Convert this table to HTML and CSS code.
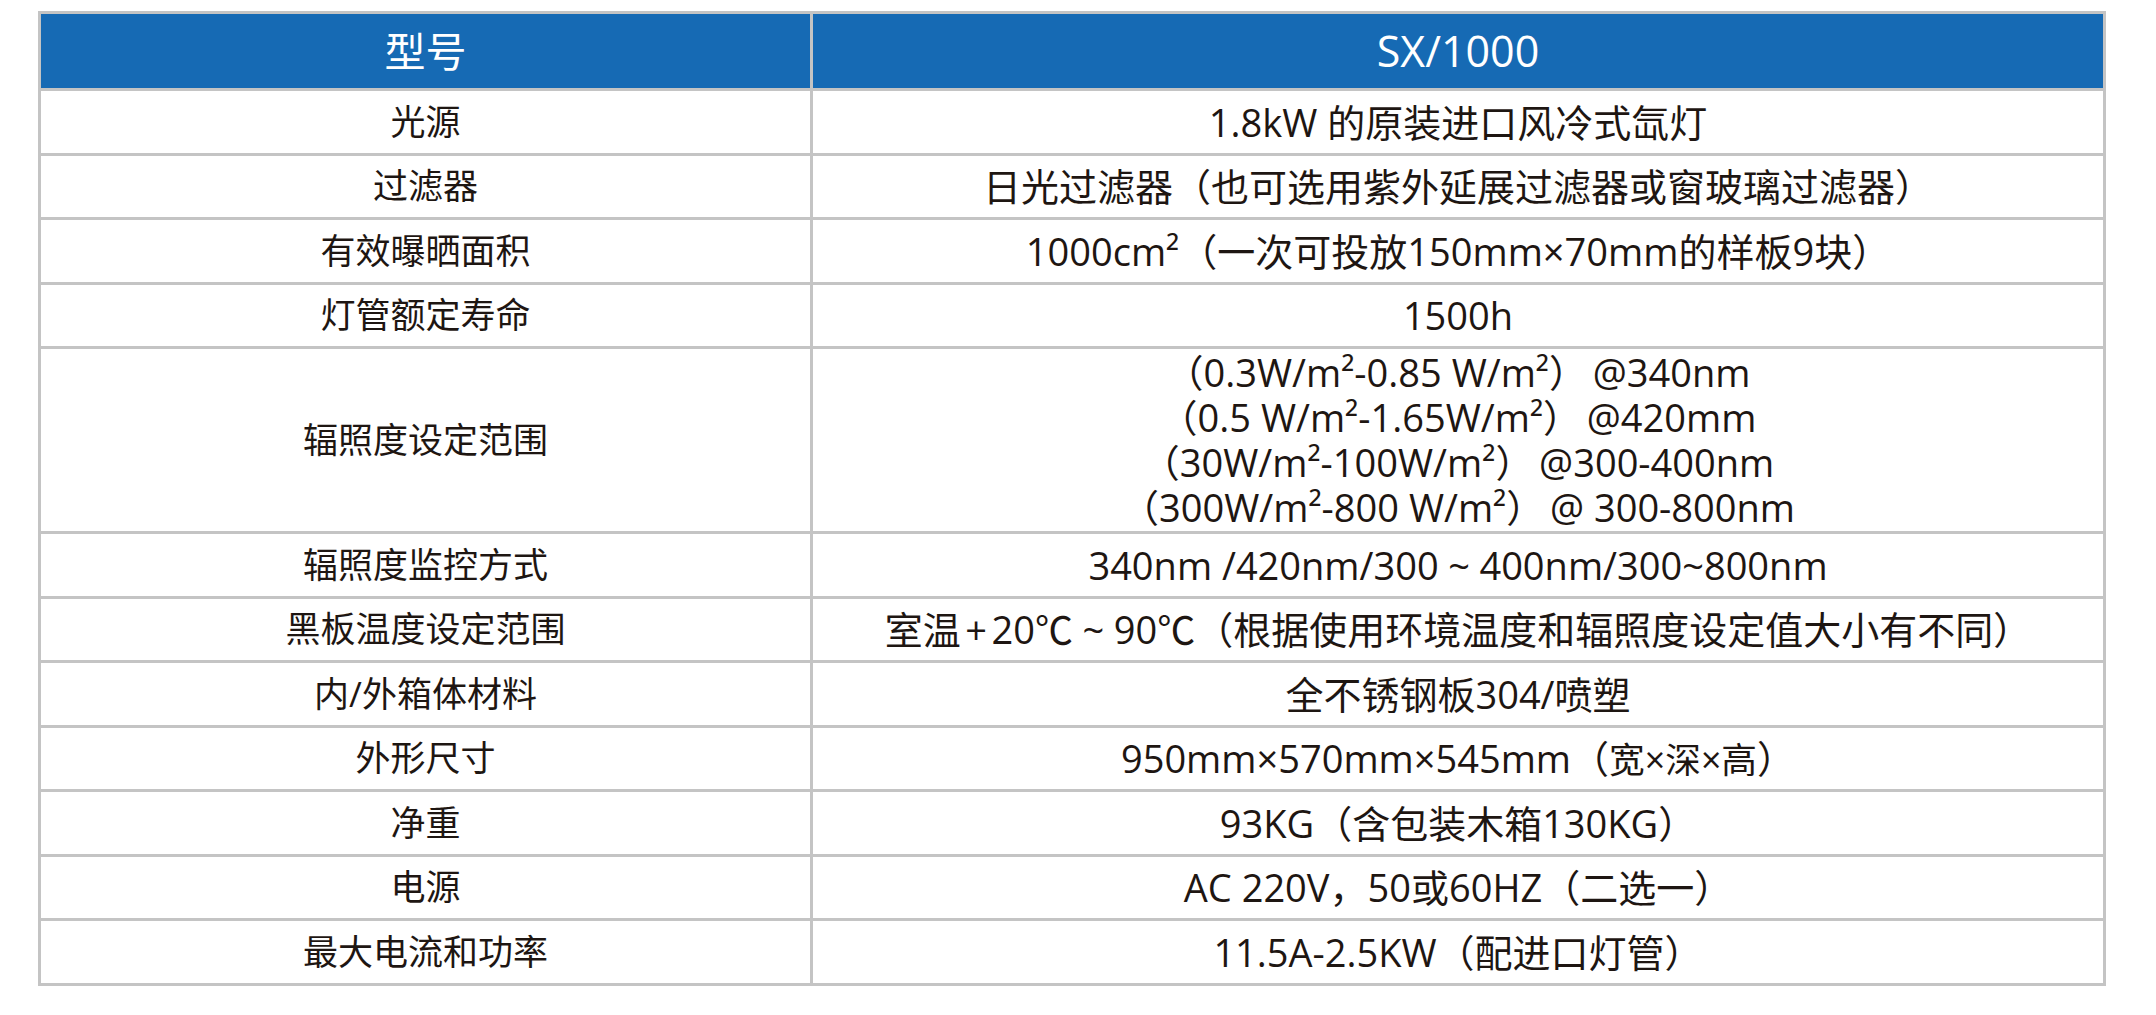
FILE: index.html
```html
<!DOCTYPE html>
<html lang="zh-CN">
<head>
<meta charset="utf-8">
<title>SX/1000 参数</title>
<link rel="stylesheet" href="styles.css">
</head>
<body>
<table class="spec">
  <colgroup><col class="c-name"><col class="c-val"></colgroup>
  <thead>
    <tr class="head"><th class="h-name">型号</th><th class="h-val">SX/1000</th></tr>
  </thead>
  <tbody>
    <tr><td>光源</td><td class="val">1.8kW 的原装进口风冷式氙灯</td></tr>
    <tr><td>过滤器</td><td class="val">日光过滤器（也可选用紫外延展过滤器或窗玻璃过滤器）</td></tr>
    <tr><td>有效曝晒面积</td><td class="val">1000cm²（一次可投放150mm×70mm的样板9块）</td></tr>
    <tr><td>灯管额定寿命</td><td class="val">1500h</td></tr>
    <tr class="tall"><td>辐照度设定范围</td><td class="val multi">
      <div class="ln">（0.3W/m²-0.85 W/m²）<span class="gap"></span>@340nm</div>
      <div class="ln">（0.5 W/m²-1.65W/m²）<span class="gap"></span>@420mm</div>
      <div class="ln">（30W/m²-100W/m²）<span class="gap"></span>@300-400nm</div>
      <div class="ln">（300W/m²-800 W/m²）<span class="gap"></span>@ 300-800nm</div>
    </td></tr>
    <tr><td>辐照度监控方式</td><td class="val">340nm /420nm/300<span class="tl">~</span>400nm/300~800nm</td></tr>
    <tr><td>黑板温度设定范围</td><td class="val">室温<span class="pl">+</span>20℃<span class="tl">~</span>90℃（根据使用环境温度和辐照度设定值大小有不同）</td></tr>
    <tr><td>内/外箱体材料</td><td class="val">全不锈钢板304/喷塑</td></tr>
    <tr><td>外形尺寸</td><td class="val">950mm×570mm×545mm（<span class="small">宽×深×高</span>）</td></tr>
    <tr><td>净重</td><td class="val">93KG（含包装木箱130KG）</td></tr>
    <tr><td>电源</td><td class="val">AC 220V，50或60HZ（二选一）</td></tr>
    <tr><td>最大电流和功率</td><td class="val">11.5A-2.5KW（配进口灯管）</td></tr>
  </tbody>
</table>
</body>
</html>
```
FILE: styles.css
```css
html, body {
  margin: 0;
  padding: 0;
  background: #ffffff;
}
body {
  font-family: "Open Sans", "Noto Sans CJK SC", sans-serif;
  color: #1e1612;
}
.spec {
  margin: 11px 0 0 38px;
  width: 2068px;
  border-collapse: collapse;
  table-layout: fixed;
  border: 3px solid #c4c4c4;
}
.c-name { width: 772px; }
.spec th,
.spec td {
  border: 3px solid #c4c4c4;
  text-align: center;
  vertical-align: middle;
  padding: 0;
  font-size: 35px;
  font-weight: 400;
  line-height: 40px;
}
.spec td.val {
  font-size: 38px;
}
.spec tr { height: 64.5px; }
.spec tr.head { height: 77px; }
.spec tr.head th {
  background: #166ab4;
  color: #ffffff;
}
.spec th.h-name { font-size: 41px; }
.spec th.h-val { font-size: 43px; }
.spec tr.tall { height: 185px; }
.spec td.multi { line-height: 45px; }
.ln {
  height: 45px;
  white-space: nowrap;
}
.gap {
  display: inline-block;
  width: 0.15em;
}
.tl {
  display: inline-block;
  margin: 0 0.25em;
}
.pl {
  display: inline-block;
  margin: 0 0.12em;
}
.small {
  font-size: 0.94em;
}
```
